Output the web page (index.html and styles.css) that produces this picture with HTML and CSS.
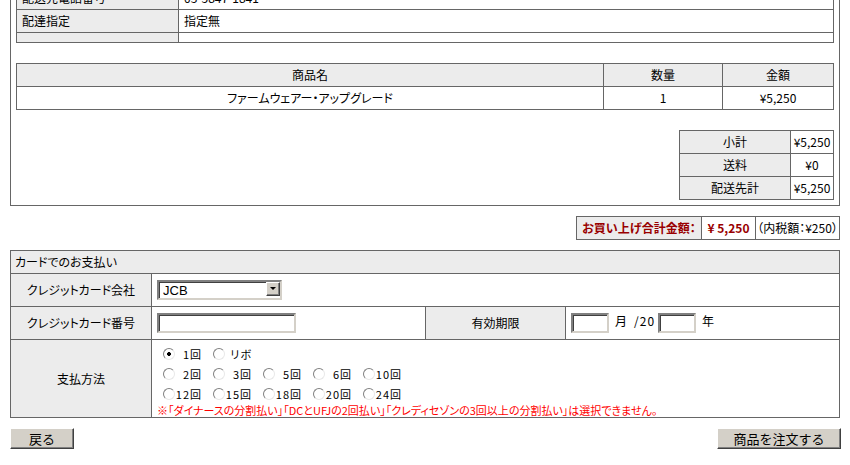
FILE: index.html
```html
<!DOCTYPE html>
<html lang="ja">
<head>
    <meta charset="UTF-8">
    <title>ご注文内容の確認</title>
    <link rel="stylesheet" href="styles.css">
</head>
<body>
    <div class="page">
        <div class="order-box">
            <table class="info">
                <tr><td class="label">配送先電話番号</td><td>03-5847-1841</td></tr>
                <tr><td class="label">配達指定</td><td>指定無</td></tr>
                <tr class="blank"><td class="label"></td><td></td></tr>
            </table>

            <table class="items">
                <colgroup><col class="c-name"><col class="c-qty"><col></colgroup>
                <tr><th>商品名</th><th>数量</th><th>金額</th></tr>
                <tr><td>ファームウェアー・アップグレード</td><td>1</td><td>¥5,250</td></tr>
            </table>

            <table class="subtotal">
                <colgroup><col class="c-sub"><col></colgroup>
                <tr><th>小計</th><td>¥5,250</td></tr>
                <tr><th>送料</th><td>¥0</td></tr>
                <tr><th>配送先計</th><td>¥5,250</td></tr>
            </table>
        </div>

        <table class="grand">
            <tr>
                <th>お買い上げ合計金額：</th>
                <td class="amount">¥ 5,250</td>
                <td>（内税額：¥250）</td>
            </tr>
        </table>

        <table class="card">
            <colgroup><col class="c-label"><col class="c-field"><col class="c-label2"><col></colgroup>
            <tr class="card-head"><td colspan="4">カードでのお支払い</td></tr>
            <tr>
                <th>クレジットカード会社</th>
                <td colspan="3">
                    <span class="select-wrap">
                        <select>
                            <option>JCB</option>
                            <option>VISA</option>
                            <option>MASTER</option>
                        </select>
                        <span class="select-btn"></span>
                    </span>
                </td>
            </tr>
            <tr>
                <th>クレジットカード番号</th>
                <td><input type="text" class="card-no"></td>
                <th>有効期限</th>
                <td><input type="text" class="short"><span class="unit">月</span><span class="sep">/20</span><input type="text" class="short"><span class="unit">年</span></td>
            </tr>
            <tr>
                <th>支払方法</th>
                <td colspan="3" class="pay">
                    <div class="pay-line">
                        <label class="opt"><input type="radio" name="pay" checked><span>1回</span></label>
                        <label class="opt"><input type="radio" name="pay"><span>リボ</span></label>
                    </div>
                    <div class="pay-line">
                        <label class="opt"><input type="radio" name="pay"><span>2回</span></label>
                        <label class="opt"><input type="radio" name="pay"><span>3回</span></label>
                        <label class="opt"><input type="radio" name="pay"><span>5回</span></label>
                        <label class="opt"><input type="radio" name="pay"><span>6回</span></label>
                        <label class="opt"><input type="radio" name="pay"><span>10回</span></label>
                    </div>
                    <div class="pay-line">
                        <label class="opt"><input type="radio" name="pay"><span>12回</span></label>
                        <label class="opt"><input type="radio" name="pay"><span>15回</span></label>
                        <label class="opt"><input type="radio" name="pay"><span>18回</span></label>
                        <label class="opt"><input type="radio" name="pay"><span>20回</span></label>
                        <label class="opt"><input type="radio" name="pay"><span>24回</span></label>
                    </div>
                    <p class="note">※「ダイナースの分割払い」「DCとUFJの2回払い」「クレディセゾンの3回以上の分割払い」は選択できません。</p>
                </td>
            </tr>
        </table>

        <div class="actions">
            <button type="button">戻る</button>
            <button type="button" class="order">商品を注文する</button>
        </div>
    </div>
</body>
</html>
```

FILE: styles.css
```css
body{
    margin: 0;
    background: #fff;
    color: #000;
    font-family: "Noto Sans CJK JP", sans-serif;
    font-size: 12px;
    font-feature-settings: "palt";
}
.page{
    width: 830px;
    margin: -20px 0 0 10px;
}
table{
    border-collapse: collapse;
    table-layout: fixed;
}
td, th{
    border: 1px solid #666;
    padding: 0 5px;
    font-weight: normal;
    line-height: 14px;
}
.order-box{
    border: 1px solid #666;
    padding: 5px;
}

/* delivery info */
.info{
    width: 100%;
}
.info td{
    height: 22px;
}
.info .label{
    width: 151px;
    background-color: #ececec;
}
.info .blank td{
    height: 9px;
}

/* items */
.items{
    width: 100%;
    margin-top: 20px;
}
.items th, .items td{
    height: 22px;
    text-align: center;
}
.items th{
    background-color: #ececec;
}
.c-name{ width: 587px; }
.c-qty{ width: 119px; }

.subtotal{
    width: 155px;
    margin: 20px 0 0 auto;
}
.subtotal th, .subtotal td{
    height: 22px;
    text-align: center;
    padding: 0;
}
.subtotal th{
    background-color: #ececec;
}
.c-sub{ width: 111px; }

/* grand total */
.grand{
    margin: 10px 0 0 auto;
    width: 264px;
}
.grand th, .grand td{
    height: 22px;
    text-align: center;
    padding: 0;
}
.grand th{
    width: 124px;
    background-color: #ececec;
    color: #990000;
    font-weight: bold;
}
.grand .amount{
    width: 53px;
    color: #990000;
    font-weight: bold;
}

/* card payment */
.card{
    width: 830px;
    margin-top: 10px;
}
.c-label{ width: 141px; }
.c-field{ width: 274px; }
.c-label2{ width: 140px; }
.card th{
    background-color: #ececec;
    text-align: center;
}
.card td, .card th{
    height: 32px;
}
.card .card-head td{
    height: 22px;
    background-color: #ececec;
    padding-left: 4px;
}
.select-wrap{
    position: relative;
    display: inline-block;
    vertical-align: middle;
}
select{
    appearance: none;
    width: 125px;
    height: 20px;
    margin: 0;
    padding: 0 0 0 4px;
    border: 2px solid;
    border-color: #808080 #d4d0c8 #d4d0c8 #808080;
    box-shadow: inset 1px 1px #404040;
    background: #fff;
    font-family: "Liberation Sans", sans-serif;
    font-size: 13px;
    color: #000;
}
.select-btn{
    position: absolute;
    top: 2px;
    right: 2px;
    width: 12px;
    height: 12px;
    border: 1px solid;
    border-color: #fff #404040 #404040 #fff;
    box-shadow: inset -1px -1px #808080;
    background-color: #d4d0c8;
    pointer-events: none;
}
.select-btn::after{
    content: "";
    position: absolute;
    left: 3px;
    top: 4px;
    border-left: 3px solid transparent;
    border-right: 3px solid transparent;
    border-top: 3px solid #000;
}
input[type="text"]{
    height: 20px;
    box-sizing: border-box;
    margin: 0;
    padding: 0 2px;
    border: 2px solid;
    border-color: #808080 #d4d0c8 #d4d0c8 #808080;
    box-shadow: inset 1px 1px #404040;
    vertical-align: middle;
    font-size: 12px;
}
.card-no{
    width: 139px;
}
.short{
    width: 38px;
}
.unit{
    margin: 0 6px;
}
.sep{
    margin-left: 1px;
    margin-right: 3px;
    letter-spacing: 1px;
}
.pay{
    height: 79px;
    padding-top: 4px;
    vertical-align: top;
}
.pay-line{
    display: flex;
    height: 20px;
    align-items: center;
}
.opt{
    display: flex;
    flex: none;
    align-items: center;
    width: 50px;
}
.opt input{
    appearance: none;
    flex: none;
    width: 12px;
    height: 12px;
    margin: 0 0 0 6px;
    border: 1px solid;
    border-color: #808080 #e8e8e8 #e8e8e8 #808080;
    border-radius: 50%;
    background: #fff;
}
.opt input:checked{
    background: radial-gradient(circle, #000 0, #000 1.6px, #fff 2.2px);
}
.opt span{
    width: 27px;
    white-space: nowrap;
    text-align: right;
    font-size: 11px;
    letter-spacing: 1px;
}
.note{
    margin: 0;
    color: #ff0000;
    font-size: 11px;
    line-height: 13px;
}

/* buttons */
.actions{
    display: flex;
    justify-content: space-between;
    margin: 10px -1px 0 0;
}
button{
    height: 21px;
    padding: 0 10px;
    border: 1px solid;
    border-color: #fff #404040 #404040 #fff;
    box-shadow: inset -1px -1px #808080;
    background-color: #d4d0c8;
    font-family: "Noto Sans CJK JP", sans-serif;
    font-size: 13px;
    line-height: 17px;
    color: #000;
}
button:first-child{
    width: 64px;
}
.order{
    width: 124px;
}
```
